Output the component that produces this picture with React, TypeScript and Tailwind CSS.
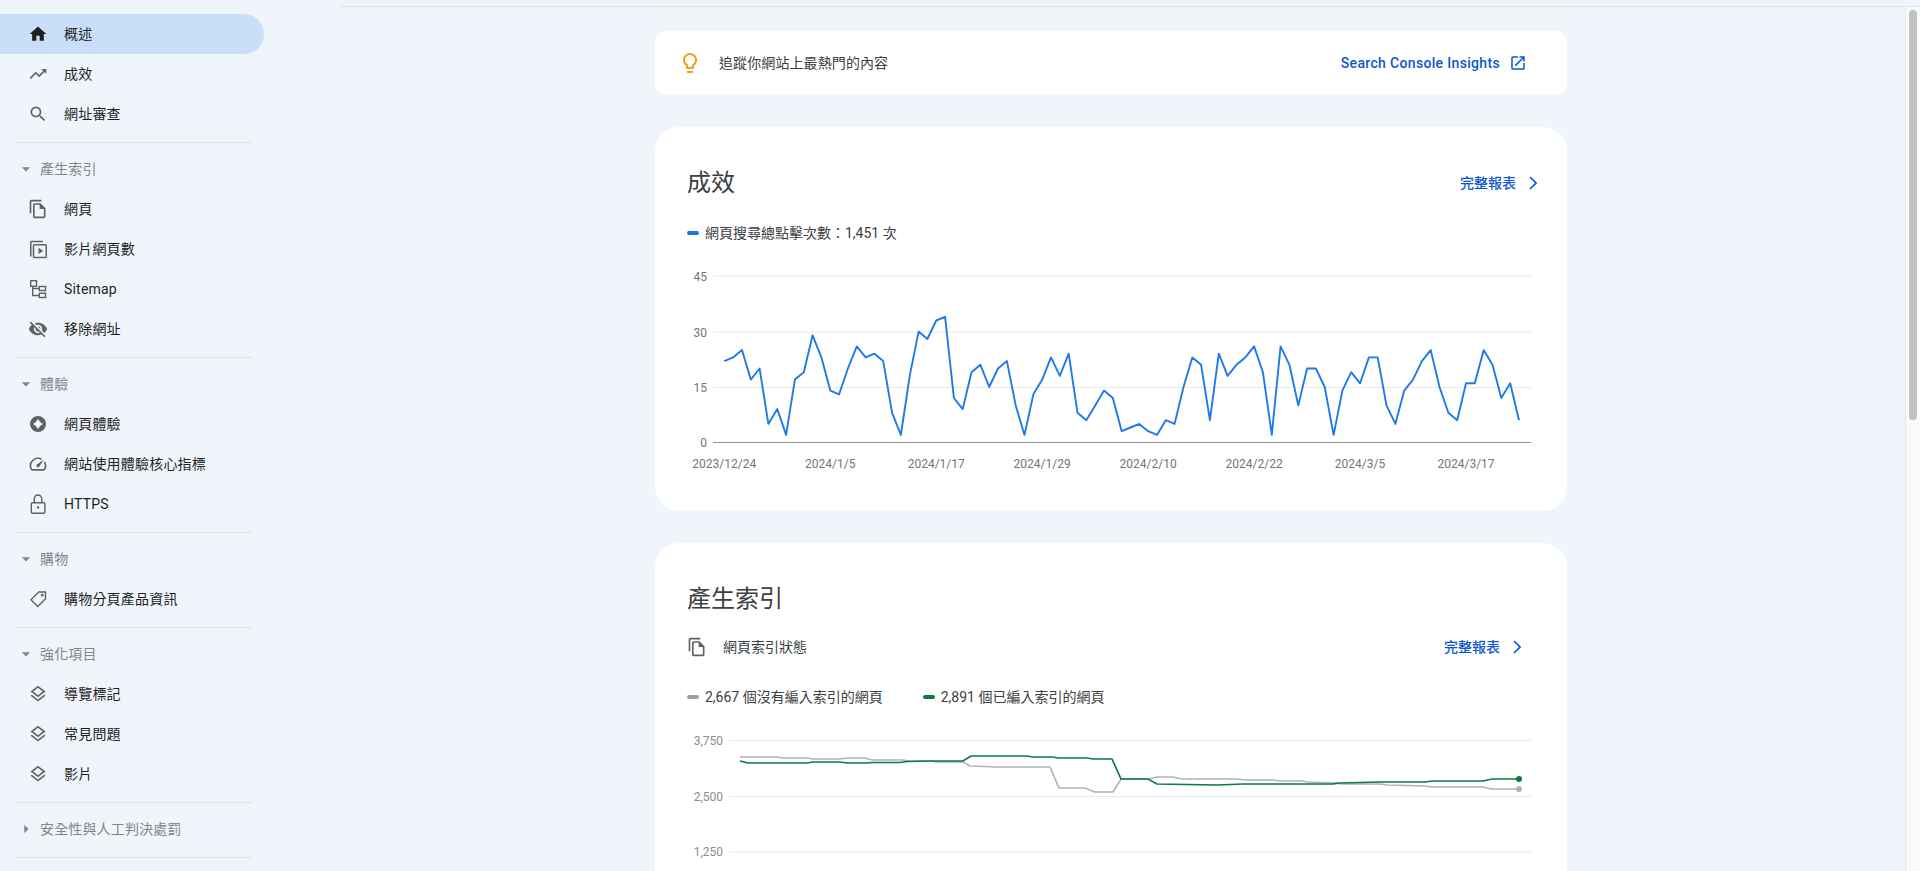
import type { ReactNode } from "react";
import {
  MdHome,
  MdTrendingUp,
  MdSearch,
  MdOutlineFileCopy,
  MdVisibilityOff,
  MdOutlineSpeed,
  MdOutlineLayers,
  MdOutlineLightbulb,
  MdOpenInNew,
  MdArrowDropDown,
  MdArrowRight,
} from "react-icons/md";
import type { IconType } from "react-icons";

function SitemapIcon({ className }: { className?: string }) {
  return (
    <svg viewBox="0 0 20 20" fill="none" stroke="currentColor" strokeWidth="1.4" className={className}>
      <rect x="2.7" y="1.700" width="5.800" height="5.600" />
      <path d="M4.700 7.300V16.500H11.300M4.700 9.500H11.300" />
      <rect x="11.300" y="7.500" width="6.200" height="4" />
      <rect x="11.300" y="14.200" width="6.200" height="4.300" />
    </svg>
  );
}

function VideoPagesIcon({ className }: { className?: string }) {
  return (
    <svg viewBox="0 0 20 20" fill="none" stroke="currentColor" strokeWidth="1.500" className={className}>
      <path d="M2.750 17.500V3.500a1 1 0 0 1 1-1H15" />
      <rect x="5.500" y="5.750" width="12.750" height="12.750" rx="1" />
      <path d="M10.500 8.700v6.400l4.800-3.200z" fill="currentColor" stroke="none" />
    </svg>
  );
}

function ExperienceIcon({ className }: { className?: string }) {
  return (
    <svg viewBox="0 0 20 20" className={className}>
      <path
        fill="currentColor"
        fillRule="evenodd"
        d="M10 2a8 8 0 1 0 0 16 8 8 0 0 0 0-16zm0 3 2.100 2.900 2.900 2.100-2.900 2.100-2.100 2.900-2.100-2.900L5 10l2.900-2.100z"
      />
    </svg>
  );
}

function LockIcon({ className }: { className?: string }) {
  return (
    <svg viewBox="0 0 20 20" fill="none" stroke="currentColor" strokeWidth="1.400" className={className}>
      <rect x="3.300" y="8.700" width="13.600" height="10.600" rx="1" />
      <path d="M6.300 8.700V4.700a3.700 3.700 0 0 1 7.400 0v4" />
      <circle cx="10" cy="13.500" r="1.200" fill="currentColor" stroke="none" />
    </svg>
  );
}

function TagIcon({ className }: { className?: string }) {
  return (
    <svg viewBox="0 0 20 20" fill="none" stroke="currentColor" strokeWidth="1.4" strokeLinejoin="round" className={className}>
      <path d="M3 10.800 10.800 3H17.500V9.700L9.700 17.500z" />
      <circle cx="14.300" cy="6.200" r="0.700" />
    </svg>
  );
}

function Chevron() {
  return (
    <svg viewBox="0 0 8 14" className="-mr-[2px] h-[14px] w-2" fill="none" stroke="currentColor" strokeWidth="1.6">
      <path d="M1 1l6 6-6 6" />
    </svg>
  );
}

type NavRow = { label: string; icon: IconType | typeof SitemapIcon; active?: boolean };
type NavGroup = { title?: string; open?: boolean; rows: NavRow[] };

const NAV: NavGroup[] = [
  {
    rows: [
      { label: "概述", icon: MdHome, active: true },
      { label: "成效", icon: MdTrendingUp },
      { label: "網址審查", icon: MdSearch },
    ],
  },
  {
    title: "產生索引",
    open: true,
    rows: [
      { label: "網頁", icon: MdOutlineFileCopy },
      { label: "影片網頁數", icon: VideoPagesIcon },
      { label: "Sitemap", icon: SitemapIcon },
      { label: "移除網址", icon: MdVisibilityOff },
    ],
  },
  {
    title: "體驗",
    open: true,
    rows: [
      { label: "網頁體驗", icon: ExperienceIcon },
      { label: "網站使用體驗核心指標", icon: MdOutlineSpeed },
      { label: "HTTPS", icon: LockIcon },
    ],
  },
  { title: "購物", open: true, rows: [{ label: "購物分頁產品資訊", icon: TagIcon }] },
  {
    title: "強化項目",
    open: true,
    rows: [
      { label: "導覽標記", icon: MdOutlineLayers },
      { label: "常見問題", icon: MdOutlineLayers },
      { label: "影片", icon: MdOutlineLayers },
    ],
  },
  { title: "安全性與人工判決處罰", open: false, rows: [] },
];

function Sidebar() {
  return (
    <aside className="w-[340px] shrink-0 pt-[14px]">
      {NAV.map((group, i) => (
        <div key={i} className="w-[264px]">
          {group.title ? (
            <div className="mt-[6px] flex h-10 items-center gap-1 pl-4 text-sm tracking-[0.15px] text-[#80868b]">
              {group.open ? (
                <MdArrowDropDown className="h-5 w-5" />
              ) : (
                <MdArrowRight className="h-5 w-5" />
              )}
              <span>{group.title}</span>
            </div>
          ) : null}
          {group.rows.map((row) => {
            const Icon = row.icon;
            return (
              <div
                key={row.label}
                className={`flex h-10 items-center gap-4 pl-7 text-sm tracking-[0.2px] text-[#1f1f1f] ${
                  row.active ? "rounded-r-full bg-[#c9dff9]" : ""
                }`}
              >
                <Icon className={`h-5 w-5 ${row.active ? "text-[#1f1f1f]" : "text-[#5f6368]"}`} />
                <span>{row.label}</span>
              </div>
            );
          })}
          <div className="mt-2 ml-4 w-[236px] border-t border-[#dfe1e5]" />
        </div>
      ))}
    </aside>
  );
}

const CLICKS = [
  22, 23, 25, 17, 20, 5, 9, 2, 17, 19, 29, 23, 14, 13, 20, 26, 23, 24, 22, 8, 2, 18, 30, 28, 33, 34, 12, 9, 19, 21, 15,
  20, 22, 10, 2, 13, 17, 23, 18, 24, 8, 6, 10, 14, 12, 3, 4, 5, 3, 2, 6, 5, 15, 23, 21, 6, 24, 18, 21, 23, 26, 19, 2,
  26, 21, 10, 20, 20, 15, 2, 14, 19, 16, 23, 23, 10, 5, 14, 17, 22, 25, 15, 8, 6, 16, 16, 25, 21, 12, 16, 6,
];

const X_LABELS = ["2023/12/24", "2024/1/5", "2024/1/17", "2024/1/29", "2024/2/10", "2024/2/22", "2024/3/5", "2024/3/17"];

function ClicksChart() {
  const points = CLICKS.map((v, i) => `${(37.3 + i * 8.83).toFixed(1)},${(182.3 - v * 3.69).toFixed(1)}`).join(" ");
  const grid = [
    { label: "45", y: 16 },
    { label: "30", y: 72 },
    { label: "15", y: 127.5 },
  ];
  return (
    <svg width="848" height="220" className="mt-[17px] block font-[Roboto,sans-serif]">
      {grid.map((g) => (
        <g key={g.label}>
          <line x1="26" x2="844" y1={g.y} y2={g.y} stroke="#e8eaed" />
          <text x="20" y={g.y + 4.5} textAnchor="end" fontSize="12" fill="#70757a">
            {g.label}
          </text>
        </g>
      ))}
      <line x1="26" x2="844" y1="182.500" y2="182.500" stroke="#8f9296" />
      <text x="20" y="187" textAnchor="end" fontSize="12" fill="#70757a">
        0
      </text>
      <polyline points={points} fill="none" stroke="#2079e9" strokeWidth="1.900" strokeLinejoin="round" />
      {X_LABELS.map((l, i) => (
        <text key={l} x={37.3 + i * 12 * 8.83} y="208" textAnchor="middle" fontSize="12" fill="#70757a">
          {l}
        </text>
      ))}
    </svg>
  );
}

// traced from the report, in svg pixels
const NOT_INDEXED =
  "53,37 90,37 96,38 120,38 126,39 153,39 160,38 178,38 185,40 216,40 221,41 246,41 248,42 276,42 283,46 310,47 363,47 372,68 398,68 408,72 426,72 434,59 461,59 470,57 486,57 495,59 550,59 558,60 586,60 593,61 616,61 620,62 650,63 653,64 693,64 700,65 738,66 745,67 796,67 805,69 832,69";
const INDEXED =
  "53,41 61,43 120,43 126,42 153,42 160,43 180,43 185,42.500 213,42.500 220,41.500 246,41 276,41 284,36 340,36 346,37 366,37 371,38 400,38 406,39 425,39 434,59 461,59 470,64 530,65 556,64 646,64 653,63 693,62 700,62 738,62 745,61 796,61 805,59 832,59";

function IndexingChart() {
  const grid = [
    { label: "3,750", y: 20.500 },
    { label: "2,500", y: 76.500 },
    { label: "1,250", y: 132 },
  ];
  return (
    <svg width="848" height="200" className="mt-[13px] block font-[Roboto,sans-serif]">
      {grid.map((g) => (
        <g key={g.label}>
          <line x1="42" x2="844" y1={g.y} y2={g.y} stroke="#e8eaed" />
          <text x="36" y={g.y + 4} textAnchor="end" fontSize="12" fill="#8a8e93">
            {g.label}
          </text>
        </g>
      ))}
      <polyline points={NOT_INDEXED} fill="none" stroke="#b3b3b3" strokeWidth="1.700" />
      <polyline points={INDEXED} fill="none" stroke="#0b7a3e" strokeWidth="1.700" />
      <circle cx="832" cy="69" r="3" fill="#b3b3b3" />
      <circle cx="832" cy="59" r="3" fill="#0b7a3e" />
    </svg>
  );
}

function FullReport() {
  return (
    <a className="flex items-center gap-[13px] text-sm font-medium text-[#0b57d0]">
      完整報表
      <Chevron />
    </a>
  );
}

function LegendItem({ color, children }: { color: string; children: ReactNode }) {
  return (
    <div className="flex h-5 items-center gap-[6px] text-sm text-[#3c4043]">
      <span className={`h-1 w-3 rounded-full ${color}`} />
      <span>{children}</span>
    </div>
  );
}

export default function App() {
  return (
    <div className="flex h-screen overflow-hidden bg-[#f0f4fb] font-[Roboto,'Noto_Sans_CJK_TC',sans-serif]">
      <Sidebar />
      <div className="flex min-w-0 flex-1 flex-col">
        <div className="h-[7px] shrink-0 border-b border-[#dfe1e5]" />
        <div className="flex min-h-0 flex-1">
          <main className="min-w-0 flex-1 overflow-hidden pt-6 pl-[315px]">
            <div className="flex h-16 w-[912px] items-center justify-between rounded-xl bg-white pr-10 pl-[23px]">
              <div className="flex items-center gap-[17px] text-sm tracking-[0.1px] text-[#3c4043]">
                <MdOutlineLightbulb className="h-6 w-6 text-[#f79a1e]" />
                追蹤你網站上最熱門的內容
              </div>
              <a className="flex items-center gap-[9px] text-sm font-medium tracking-[0.33px] text-[#0b57d0]">
                Search Console Insights
                <MdOpenInNew className="h-[18px] w-[18px]" />
              </a>
            </div>

            <section className="mt-8 w-[912px] rounded-3xl bg-white px-8 pt-10 pb-[31px]">
              <div className="flex h-8 items-center justify-between">
                <h2 className="text-2xl text-[#3c4043]">成效</h2>
                <FullReport />
              </div>
              <div className="mt-6">
                <LegendItem color="bg-[#1a73e8]">網頁搜尋總點擊次數：1,451 次</LegendItem>
              </div>
              <ClicksChart />
            </section>

            <section className="mt-8 w-[912px] rounded-3xl bg-white px-8 pt-10">
              <h2 className="flex h-8 items-center text-2xl text-[#3c4043]">產生索引</h2>
              <div className="mt-[22px] flex h-5 items-center justify-between pr-4">
                <div className="flex items-center gap-4 text-sm text-[#3c4043]">
                  <MdOutlineFileCopy className="h-5 w-5 text-[#5f6368]" />
                  網頁索引狀態
                </div>
                <FullReport />
              </div>
              <div className="mt-[30px] flex gap-10">
                <LegendItem color="bg-[#9e9e9e]">2,667 個沒有編入索引的網頁</LegendItem>
                <LegendItem color="bg-[#0b7a3e]">2,891 個已編入索引的網頁</LegendItem>
              </div>
              <IndexingChart />
            </section>
          </main>
          <div className="w-[15px] shrink-0 border-l border-[#e3e5e8] bg-[#fafafa] pt-[3px] pl-[3px]">
            <div className="h-[410px] w-2 rounded-full bg-[#c1c1c1]" />
          </div>
        </div>
      </div>
    </div>
  );
}
